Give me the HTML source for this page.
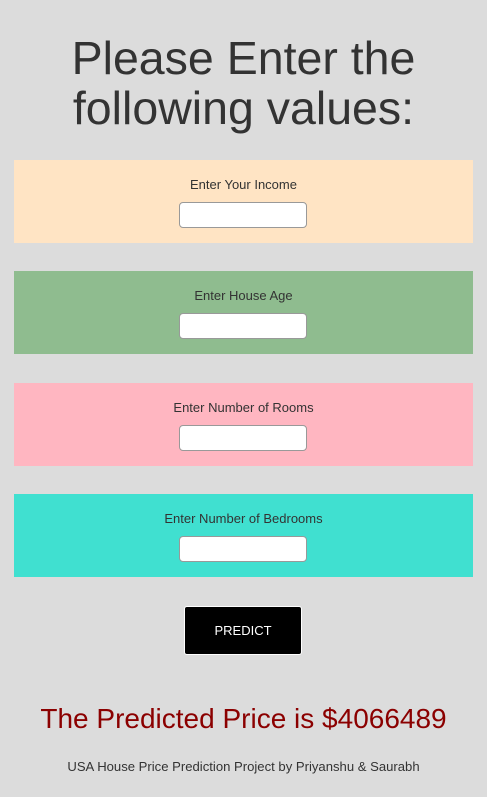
<!DOCTYPE html>
<html><head><style>
body{margin:0;width:487px;height:797px;background:#dcdcdc;font-family:"Liberation Sans",Arial,sans-serif;position:relative;overflow:hidden}
h1{position:absolute;top:33px;left:0;width:487px;margin:0;text-align:center;font-weight:normal;font-size:46.5px;line-height:50px;color:#333}
.p{position:absolute;left:14px;width:459px;height:83px}
.p span{position:absolute;top:17px;left:0;width:100%;text-align:center;font-size:13px;color:#333}
.p i{position:absolute;top:42px;left:165px;width:126px;height:24px;background:#fff;border:1px solid #999;border-radius:4px}
.btn{position:absolute;left:184px;top:606px;width:118px;height:49px;background:#000;border:1px solid #fff;border-radius:3px;box-sizing:border-box;color:#fff;font-size:13px;text-align:center;line-height:47px}
.pr{position:absolute;top:703px;width:487px;text-align:center;font-size:28px;color:#8b0000}
.f{position:absolute;top:759px;width:487px;text-align:center;font-size:13.1px;color:#333}
</style></head><body>
<h1>Please Enter the<br>following values:</h1>
<div class="p" style="top:160px;background:#ffe4c4"><span>Enter Your Income</span><i></i></div>
<div class="p" style="top:271px;background:#8fbc8f"><span>Enter House Age</span><i></i></div>
<div class="p" style="top:383px;background:#ffb6c1"><span>Enter Number of Rooms</span><i></i></div>
<div class="p" style="top:494px;background:#40e0d0"><span>Enter Number of Bedrooms</span><i></i></div>
<div class="btn">PREDICT</div>
<div class="pr">The Predicted Price is $4066489</div>
<div class="f">USA House Price Prediction Project by Priyanshu &amp; Saurabh</div>
</body></html>
